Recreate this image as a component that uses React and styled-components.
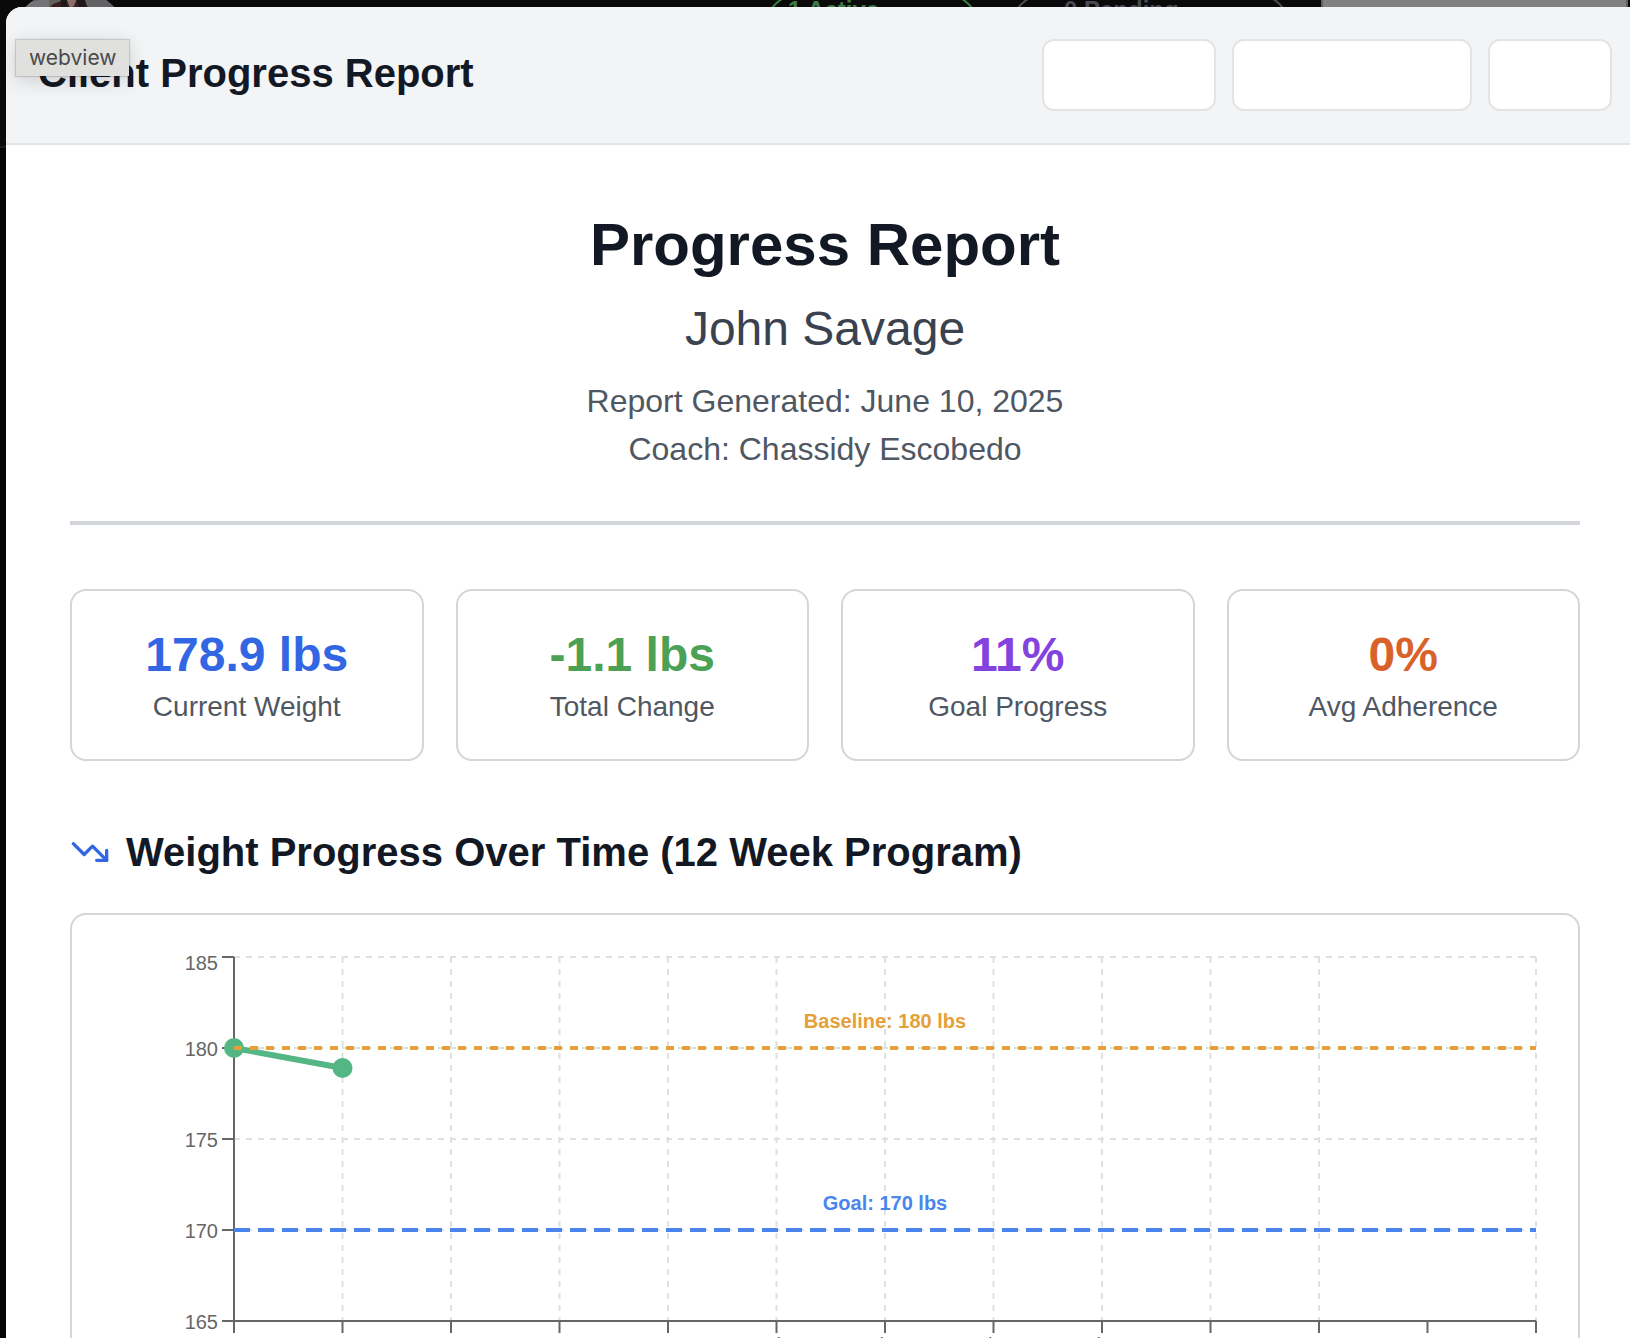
import React, { useLayoutEffect, useRef, useState } from "react";
import styled, { createGlobalStyle } from "styled-components";
import { TrendingDown } from "lucide-react";

const GlobalStyle = createGlobalStyle`
  *, *::before, *::after { box-sizing: border-box; }
  body {
    margin: 0;
    background: #050505;
    color: #131825;
    font-family: "Liberation Sans", Arial, sans-serif;
  }
  h1, h2, h3, p, dl, dd, dt { margin: 0; }
`;

const Screen = styled.div`
  position: relative;
  height: 100vh;
  overflow: hidden;
`;

/* Dashboard behind the dialog, already dimmed */

const Dashboard = styled.div`
  display: flex;
  align-items: flex-start;
  gap: 30px;
  height: 160px;
  margin-top: -12px;
  padding: 0 2px 0 9px;
  background: #0a0a0a;
  border-bottom: 2px solid #171c24;
`;

const Avatar = styled.svg`
  width: 122px;
  height: 122px;
  margin-right: auto;
`;

const Pill = styled.span`
  width: ${(p) => p.$width}px;
  height: 72px;
  margin-top: 5px;
  padding: 1px ${(p) => p.$inset}px;
  border: 2px solid;
  border-radius: 36px;
  color: ${(p) => p.$color};
  font-size: 24px;
  font-weight: 700;
  line-height: 28px;
`;

const DimButton = styled.button`
  width: 307px;
  height: 72px;
  background: #808080;
  border: 2px solid #616163;
`;

/* Dialog */

const Dialog = styled.section`
  position: absolute;
  top: 7px;
  left: 6px;
  right: -14px;
  background: #fff;
  border-radius: 16px;
  overflow: hidden;
`;

const DialogHeader = styled.header`
  display: flex;
  align-items: flex-start;
  justify-content: space-between;
  padding: 32px;
  background: #f3f4f6;
  border-bottom: 2px solid #e3e4e6;
`;

const DialogTitle = styled.h2`
  font-size: 40px;
  line-height: 68px;
`;

const Actions = styled.div`
  display: flex;
  gap: 16px;
`;

const ActionButton = styled.button`
  width: ${(p) => p.$width}px;
  height: 72px;
  background: #fff;
  border: 2px solid #e3e4e6;
  border-radius: 12px;
`;

const Tooltip = styled.div`
  position: absolute;
  top: 40px;
  left: 16px;
  padding: 4px 13px;
  background: #e0e0de;
  color: #4a4a4a;
  font-family: Inter, sans-serif;
  font-size: 21px;
  line-height: 28px;
  box-shadow: 0 0 1px 1px rgba(0, 0, 0, 0.14), 0 4px 20px rgba(0, 0, 0, 0.16);
`;

const Report = styled.div`
  display: flex;
  flex-direction: column;
  gap: 64px;
  padding: 64px;
`;

const Intro = styled.div`
  display: flex;
  flex-direction: column;
  gap: 16px;
  padding-bottom: 48px;
  border-bottom: 4px solid #d2d5da;
  text-align: center;
`;

const ReportTitle = styled.h1`
  font-size: 60px;
  line-height: 72px;
`;

const ClientName = styled.p`
  color: #3a4250;
  font-size: 48px;
  line-height: 64px;
`;

const Details = styled.div`
  color: #4f5763;
  font-size: 32px;
  line-height: 48px;
`;

const Stats = styled.dl`
  display: grid;
  grid-template-columns: repeat(4, 1fr);
  gap: 32px;
`;

const Card = styled.div`
  padding: 32px;
  border: 2px solid #d2d5da;
  border-radius: 16px;
`;

const StatCard = styled(Card)`
  display: flex;
  flex-direction: column-reverse;
  text-align: center;
`;

const StatLabel = styled.dt`
  color: #4f5763;
  font-size: 28px;
  line-height: 40px;
`;

const StatValue = styled.dd`
  color: ${(p) => p.$color};
  font-size: 48px;
  font-weight: 700;
  line-height: 64px;
`;

const Section = styled.section`
  display: flex;
  flex-direction: column;
  gap: 32px;
`;

const SectionTitle = styled.h3`
  display: flex;
  align-items: center;
  gap: 16px;
  padding-bottom: 2px;
  font-size: 40px;
  line-height: 54px;

  svg { color: #3366e3; }
`;

const ChartSvg = styled.svg`
  display: block;
  width: 100%;
  height: 500px;
  overflow: visible;
  font-size: 20px;

  .grid { stroke: #e0e0e0; stroke-width: 2; stroke-dasharray: 6 6; }
  .axis { stroke: #666; stroke-width: 2; }
  .tick { fill: #666; }
  .baseline { stroke: #e5a03a; stroke-width: 4; stroke-dasharray: 8 8; }
  .goal { stroke: #4a85ee; stroke-width: 4; stroke-dasharray: 16 8; }
  .weight { stroke: #55b685; stroke-width: 6; fill: none; }
  .dot { fill: #55b685; }
  .note { font-weight: 700; text-anchor: middle; }
`;

const STATS = [
  { label: "Current Weight", value: "178.9 lbs", color: "#3366e3" },
  { label: "Total Change", value: "-1.1 lbs", color: "#4ca154" },
  { label: "Goal Progress", value: "11%", color: "#8443df" },
  { label: "Avg Adherence", value: "0%", color: "#d9622b" },
];

const WEEKS = [
  "Jun 2", "Jun 9", "Jun 16", "Jun 23", "Jun 30", "Jul 7", "Jul 14",
  "Jul 21", "Jul 28", "Aug 4", "Aug 11", "Aug 18", "Aug 25",
];
const WEIGHTS = [180, 178.9];
const LEVELS = [185, 180, 175, 170, 165];

function WeightChart() {
  const ref = useRef(null);
  const [width, setWidth] = useState(1442);

  useLayoutEffect(() => {
    const measure = () => setWidth(ref.current.getBoundingClientRect().width);
    measure();
    const observer = new ResizeObserver(measure);
    observer.observe(ref.current);
    return () => observer.disconnect();
  }, []);

  const left = 130;
  const right = width - 10;
  const top = 10;
  const bottom = 374;
  const x = (week) => left + ((right - left) * week) / 12;
  const y = (lbs) => top + ((185 - lbs) * (bottom - top)) / 20;
  const middle = (left + right) / 2;

  return (
    <ChartSvg ref={ref} role="img" aria-label="Weight by week">
      {LEVELS.map((lbs) => (
        <line key={lbs} className="grid" x1={left} x2={right} y1={y(lbs)} y2={y(lbs)} />
      ))}
      {WEEKS.map((week, i) =>
        i === 11 ? null : (
          <line key={week} className="grid" x1={x(i)} x2={x(i)} y1={top} y2={bottom} />
        )
      )}

      <line className="axis" x1={left} x2={right} y1={bottom} y2={bottom} />
      <line className="axis" x1={left} x2={left} y1={top} y2={bottom} />
      {WEEKS.map((week, i) => (
        <g key={week}>
          <line className="axis" x1={x(i)} x2={x(i)} y1={bottom} y2={bottom + 12} />
          <text
            className="tick"
            x={i === 12 ? width : x(i)}
            y={bottom + 31}
            textAnchor={i === 12 ? "end" : "middle"}
          >
            {week}
          </text>
        </g>
      ))}
      {LEVELS.map((lbs, i) => (
        <g key={lbs}>
          <line className="axis" x1={left - 12} x2={left} y1={y(lbs)} y2={y(lbs)} />
          <text className="tick" x={left - 16} y={y(lbs) + (i === 0 ? 13 : 8)} textAnchor="end">
            {lbs}
          </text>
        </g>
      ))}

      <polyline className="weight" points={WEIGHTS.map((w, i) => `${x(i)},${y(w)}`).join(" ")} />
      {WEIGHTS.map((w, i) => (
        <circle key={w} className="dot" cx={x(i)} cy={y(w)} r="10" />
      ))}

      <line className="baseline" x1={left} x2={right} y1={y(180)} y2={y(180)} />
      <text className="note" fill="#e5a03a" x={middle} y={y(180) - 20}>
        Baseline: 180 lbs
      </text>
      <line className="goal" x1={left} x2={right} y1={y(170)} y2={y(170)} />
      <text className="note" fill="#4a85ee" x={middle} y={y(170) - 20}>
        Goal: 170 lbs
      </text>
    </ChartSvg>
  );
}

export default function App() {
  return (
    <Screen>
      <GlobalStyle />
      <Dashboard>
        <Avatar viewBox="0 0 122 122" aria-hidden="true">
          <defs>
            <clipPath id="face">
              <circle cx="61" cy="61" r="61" />
            </clipPath>
          </defs>
          <g clipPath="url(#face)">
            <rect width="122" height="122" fill="#626264" />
            <path d="M32 12 H40 V122 H0 V18 Z" fill="#747476" />
            <path d="M38 22 L44 16 L52 13 L56 8 H70 L76 13 L80 22 V122 H38 Z" fill="#3a1f20" />
            <path d="M51 8 H58 V22 H53 Z" fill="#1d1819" />
            <path d="M67 6 H75 L78 22 H71 Z" fill="#1d1819" />
            <path d="M57 10 H68 L65 18 L61 20 Z" fill="#8a6f68" />
          </g>
        </Avatar>
        <Pill $width={216} $inset={22} $color="#3f7a46">1 Active</Pill>
        <Pill $width={281} $inset={52} $color="#4b4b53">0 Pending</Pill>
        <DimButton type="button" aria-label="Add client" />
      </Dashboard>

      <Dialog role="dialog" aria-labelledby="dialog-title">
        <DialogHeader>
          <DialogTitle id="dialog-title">Client Progress Report</DialogTitle>
          <Actions>
            <ActionButton type="button" $width={174} aria-label="Print" />
            <ActionButton type="button" $width={240} aria-label="Download" />
            <ActionButton type="button" $width={124} aria-label="Close" />
          </Actions>
        </DialogHeader>

        <Report>
          <Intro>
            <ReportTitle>Progress Report</ReportTitle>
            <ClientName>John Savage</ClientName>
            <Details>
              <p>Report Generated: June 10, 2025</p>
              <p>Coach: Chassidy Escobedo</p>
            </Details>
          </Intro>

          <Stats>
            {STATS.map((stat) => (
              <StatCard key={stat.label}>
                <StatLabel>{stat.label}</StatLabel>
                <StatValue $color={stat.color}>{stat.value}</StatValue>
              </StatCard>
            ))}
          </Stats>

          <Section>
            <SectionTitle>
              <TrendingDown size={40} aria-hidden="true" />
              Weight Progress Over Time (12 Week Program)
            </SectionTitle>
            <Card>
              <WeightChart />
            </Card>
          </Section>
        </Report>
      </Dialog>

      <Tooltip role="tooltip">webview</Tooltip>
    </Screen>
  );
}
